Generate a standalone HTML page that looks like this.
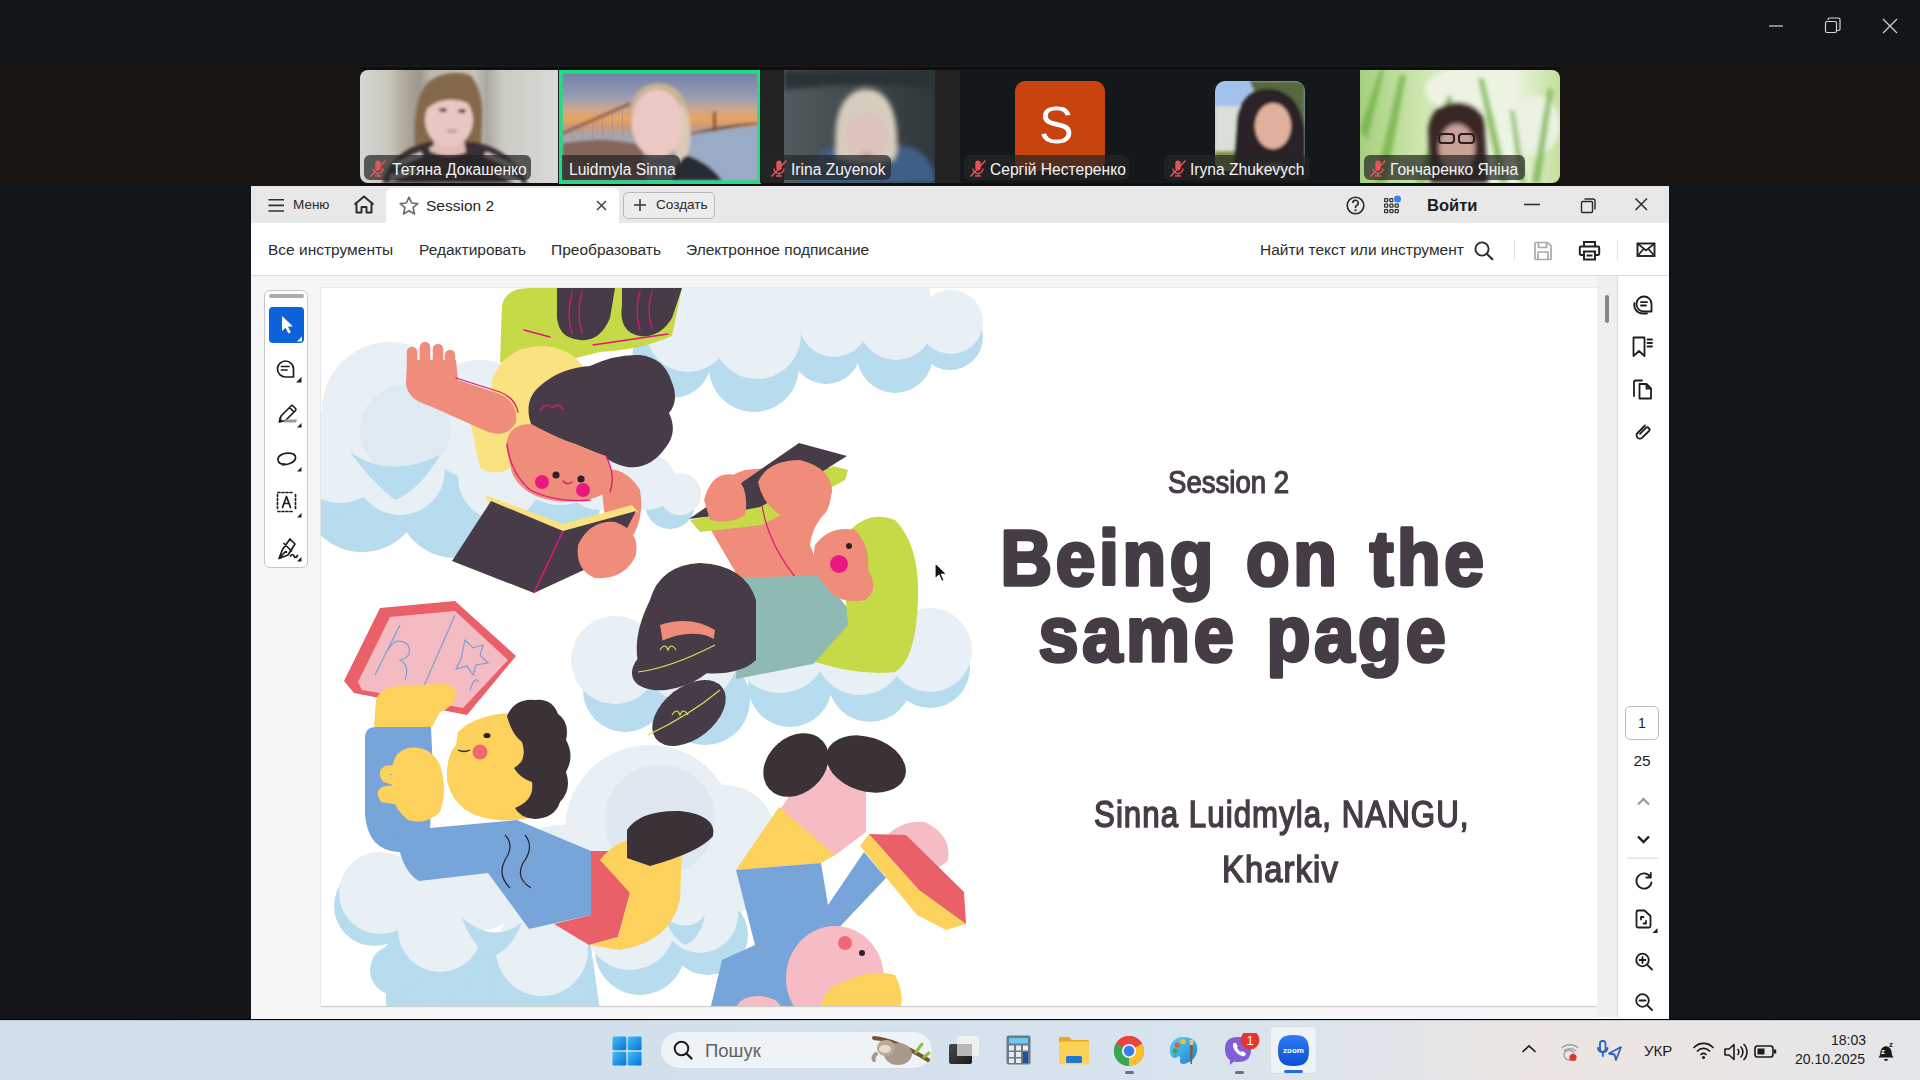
<!DOCTYPE html>
<html><head><meta charset="utf-8">
<style>
*{margin:0;padding:0;box-sizing:border-box}
html,body{width:1920px;height:1080px;overflow:hidden;background:#121619;font-family:"Liberation Sans",sans-serif;position:relative}
.a{position:absolute}
svg{display:block}
#strip{left:0;top:65px;width:1920px;height:121px;background:#1a1614}
.tile{position:absolute;top:70px;height:113px;overflow:hidden}
.nm{position:absolute;top:155px;height:25px;border-radius:6px;background:rgba(38,38,38,.72);color:#f4f4f4;font-size:15.6px;white-space:nowrap}
.nm svg{position:absolute;left:3px;top:4px}
.nm span{position:absolute;top:5.5px;left:28px;line-height:18px}
#win{left:251px;top:186px;width:1418px;height:833px;background:#fff;overflow:hidden}
#tabbar{left:0;top:0;width:1418px;height:37px;background:#e8e8e8}
#toolbar{left:0;top:37px;width:1418px;height:53px;background:#fff;border-bottom:1px solid #dadada}
.tx{position:absolute;white-space:nowrap;line-height:1}
#canvas{left:0;top:90px;width:1366px;height:743px;background:#f6f5f8}
#rpanel{left:1366px;top:90px;width:52px;height:743px;background:#fff;border-left:1px solid #dedede}
#taskbar{left:0;top:1020px;width:1920px;height:60px;background:linear-gradient(90deg,#cfdeea 0%,#d2e0ec 35%,#d7e3ee 60%,#e0e5ea 72%,#ece5e1 80%,#e9e5e4 90%,#e3e6ea 100%);border-top:1px solid #c4ccd4}
</style></head><body>
<!-- top window controls -->
<svg class="a" style="left:1760px;top:10px" width="150" height="35" viewBox="0 0 150 35">
 <line x1="9" y1="16" x2="23" y2="16" stroke="#d4d4d4" stroke-width="1.2"/>
 <rect x="65.5" y="11.5" width="11" height="11" rx="1.5" fill="none" stroke="#d4d4d4" stroke-width="1.2"/>
 <path d="M68 10 V9.5 a1.5 1.5 0 0 1 1.5 -1.5 H78.5 a1.5 1.5 0 0 1 1.5 1.5 V19 a1.5 1.5 0 0 1 -1.5 1.5 H77" fill="none" stroke="#d4d4d4" stroke-width="1.2"/>
 <path d="M123 9 L137 23 M137 9 L123 23" stroke="#d4d4d4" stroke-width="1.2"/>
</svg>

<div id="strip" class="a"></div>
<div class="a" style="left:360px;top:67px;width:1200px;height:3px;background:#0e0f10"></div>
<div class="a" style="left:360px;top:183px;width:1200px;height:3px;background:#0e0f10"></div>

<!-- tile 1 -->
<svg class="a" style="left:360px;top:70px" width="198" height="113" viewBox="0 0 198 113">
 <defs>
  <clipPath id="c1"><path d="M8 0 H198 V113 H8 A8 8 0 0 1 0 105 V8 A8 8 0 0 1 8 0Z"/></clipPath>
  <linearGradient id="g1" x1="0" x2="1" y1="0" y2="0">
   <stop offset="0" stop-color="#d5d7d3"/><stop offset=".14" stop-color="#c9c8be"/><stop offset=".22" stop-color="#b3ab9c"/><stop offset=".3" stop-color="#9a9890"/><stop offset=".36" stop-color="#bdb8aa"/><stop offset=".58" stop-color="#c4c2b8"/><stop offset=".64" stop-color="#aaa89f"/><stop offset=".72" stop-color="#cbcbc3"/><stop offset="1" stop-color="#d8dbd7"/>
  </linearGradient>
  <filter id="bl1"><feGaussianBlur stdDeviation="1.6"/></filter>
 </defs>
 <g clip-path="url(#c1)">
  <rect width="198" height="113" fill="url(#g1)"/>
  <g filter="url(#bl1)">
   <path d="M55 76 Q52 30 68 12 Q88 -2 110 5 Q124 20 122 52 L121 78 Q90 84 55 76Z" fill="#84694c"/>
   <path d="M22 113 Q32 80 68 72 L114 72 Q150 78 168 113Z" fill="#3a2f34"/>
   <path d="M36 95 L62 84 M125 84 L152 96 M30 108 L55 100 M138 102 L160 112 M70 80 L80 76" stroke="#cfccc8" stroke-width="5"/>
   <path d="M75 66 L103 66 L106 82 Q90 90 72 82Z" fill="#e2bcb5"/>
   <ellipse cx="89" cy="50" rx="24" ry="27" fill="#e9c7c1"/>
   <path d="M62 44 Q64 16 92 10 Q118 14 120 44 Q108 30 95 30 Q75 28 62 44Z" fill="#84694c"/>
   <ellipse cx="83" cy="40" rx="4" ry="2" fill="#4a3a36"/><ellipse cx="102" cy="41" rx="4" ry="2" fill="#4a3a36"/>
   <ellipse cx="92" cy="61" rx="6" ry="2" fill="#c89a98"/>
  </g>
 </g>
</svg>
<!-- tile 2 -->
<svg class="a" style="left:559px;top:70px" width="202" height="114" viewBox="0 0 202 114">
 <defs>
  <linearGradient id="g2" x1="0" x2="0" y1="0" y2="1">
   <stop offset="0" stop-color="#7382a6"/><stop offset=".22" stop-color="#9a9cb4"/><stop offset=".33" stop-color="#c8a890"/><stop offset=".42" stop-color="#e8a464"/><stop offset=".5" stop-color="#c89a7a"/><stop offset=".58" stop-color="#a8a4b0"/><stop offset="1" stop-color="#98a6bc"/>
  </linearGradient>
  <filter id="bl2"><feGaussianBlur stdDeviation="1.5"/></filter>
 </defs>
 <rect x="0" y="0" width="202" height="114" fill="#20dc84"/>
 <svg x="3.5" y="3.5" width="195" height="107" viewBox="0 0 195 107">
  <rect width="195" height="107" fill="url(#g2)"/>
  <g filter="url(#bl2)">
   <path d="M0 70 Q40 62 80 72 L85 107 H0Z" fill="#84665c"/>
   <path d="M122 62 L195 52 V107 H115Z" fill="#9aabc6"/>
   <path d="M0 60 L68 30" stroke="#8a5a48" stroke-width="2.5"/>
   <path d="M122 62 Q160 52 195 50" stroke="#8a5a48" stroke-width="2"/>
   <path d="M152 38 V58" stroke="#7a4a3a" stroke-width="2.5"/>
   <ellipse cx="96" cy="34" rx="27" ry="24" fill="#c9b594"/>
   <ellipse cx="119" cy="60" rx="9" ry="28" fill="#d8cab4"/>
   <ellipse cx="95" cy="50" rx="26" ry="34" fill="#ebc8c2"/>
   <path d="M110 107 Q115 85 125 82 Q145 88 160 107Z" fill="#262a36"/>
  </g>
  <g stroke="#a08880" stroke-width=".8" opacity=".6"><path d="M10 55 V68 M20 51 V68 M30 47 V68 M40 42 V68 M50 38 V68 M60 34 V68"/></g>
 </svg>
</svg>
<!-- tile 3 -->
<div class="a" style="left:760px;top:70px;width:200px;height:113px;background:#232323"></div>
<svg class="a" style="left:784px;top:70px" width="151" height="113" viewBox="0 0 151 113">
 <defs>
  <linearGradient id="g3" x1="0" x2="1" y1="0" y2="0">
   <stop offset="0" stop-color="#535c60"/><stop offset=".5" stop-color="#40484a"/><stop offset="1" stop-color="#30363a"/>
  </linearGradient>
  <filter id="bl3"><feGaussianBlur stdDeviation="2.5"/></filter>
 </defs>
 <rect width="151" height="113" fill="url(#g3)"/>
 <g filter="url(#bl3)">
  <path d="M0 0 H151 V18 Q80 10 0 20Z" fill="#2c3236"/>
  <path d="M15 113 Q25 80 60 74 Q95 70 130 78 Q151 90 151 113Z" fill="#3f5e88"/>
  <path d="M52 82 Q48 35 70 22 Q82 16 95 22 Q115 35 113 80 L110 90 Q80 96 52 88Z" fill="#d6cdbd"/>
  <ellipse cx="83" cy="66" rx="22" ry="24" fill="#dcc4bc"/>
  <ellipse cx="83" cy="85" rx="7" ry="2" fill="#b88a86"/>
 </g>
</svg>
<!-- tile 4 -->
<div class="a" style="left:960px;top:70px;width:400px;height:113px;background:#14181b"></div>
<div class="a" style="left:1015px;top:81px;width:90px;height:90px;border-radius:10px;background:#c9430e"></div>
<div class="tx a" style="left:1039px;top:99px;font-size:52px;color:#fff">S</div>
<!-- tile 5 -->
<svg class="a" style="left:1215px;top:81px" width="90" height="90" viewBox="0 0 90 90">
 <defs>
  <clipPath id="c5"><rect width="90" height="90" rx="10"/></clipPath>
  <filter id="bl5"><feGaussianBlur stdDeviation="1.4"/></filter>
 </defs>
 <g clip-path="url(#c5)">
  <rect width="90" height="90" fill="#a0c2ec"/>
  <g filter="url(#bl5)">
   <path d="M35 0 H90 V50 L80 40 Q60 15 40 12Z" fill="#59683e"/>
   <rect x="0" y="25" width="36" height="55" fill="#dcded8"/>
   <rect x="0" y="70" width="60" height="20" fill="#7f9a42"/>
   <path d="M18 90 L22 35 Q30 5 58 8 Q85 12 90 50 L90 90Z" fill="#2a2325"/>
   <ellipse cx="58" cy="45" rx="18" ry="23" fill="#e0b09c"/>
   <path d="M38 90 Q58 75 78 90Z" fill="#7b6b5e"/>
  </g>
 </g>
</svg>
<!-- tile 6 -->
<svg class="a" style="left:1360px;top:70px" width="200" height="113" viewBox="0 0 200 113">
 <defs>
  <clipPath id="c6"><path d="M0 0 H192 A8 8 0 0 1 200 8 V105 A8 8 0 0 1 192 113 H0Z"/></clipPath>
  <linearGradient id="g6" x1="0" x2="1" y1="0" y2="0">
   <stop offset="0" stop-color="#a6cf7e"/><stop offset=".3" stop-color="#cde6ae"/><stop offset=".55" stop-color="#e6f1da"/><stop offset=".75" stop-color="#eef5e6"/><stop offset="1" stop-color="#c4e09c"/>
  </linearGradient>
  <filter id="bl6"><feGaussianBlur stdDeviation="2.2"/></filter>
 </defs>
 <g clip-path="url(#c6)">
  <rect width="200" height="113" fill="url(#g6)"/>
  <g filter="url(#bl6)">
   <ellipse cx="110" cy="20" rx="45" ry="22" fill="#eef4e4"/>
   <ellipse cx="175" cy="55" rx="25" ry="30" fill="#eaf2e2"/>
   <path d="M15 113 L40 5 L46 5 L26 113Z M140 113 L118 8 L124 8 L148 113Z M172 113 L188 18 L193 20 L180 113Z M55 113 L88 25 L93 27 L66 113Z M0 60 L20 0 L24 0 L7 70Z M160 113 L150 40 L154 40 L166 113Z" fill="#6aac3a" opacity=".7"/>
   <path d="M70 113 L68 60 Q70 33 98 32 Q126 34 125 62 L128 113Z" fill="#3a2526"/>
   <ellipse cx="97" cy="78" rx="18" ry="24" fill="#caa196"/>
  </g>
  <g fill="none" stroke="#2a1e1e" stroke-width="2"><rect x="79" y="64" width="15" height="9" rx="3"/><rect x="99" y="64" width="15" height="9" rx="3"/></g>
 </g>
</svg>
<!-- name labels -->
<div class="nm" style="left:364px;width:167px"><svg width="22" height="19" viewBox="0 0 22 19"><rect x="8.3" y="1.5" width="5.4" height="10" rx="2.7" fill="#e8525a"/><path d="M6 9.5 a5 5 0 0 0 10 0 M11 14.5 v2.2 M8 17 h6" fill="none" stroke="#e8525a" stroke-width="1.4"/><path d="M3.5 17.5 L18.5 1.5" stroke="#e8525a" stroke-width="1.5"/></svg><span>Тетяна Докашенко</span></div>
<div class="nm" style="left:562px;width:118px;border-radius:0 6px 6px 0"><span style="left:7px">Luidmyla Sinna</span></div>
<div class="nm" style="left:765px;width:126px"><svg width="22" height="19" viewBox="0 0 22 19"><rect x="8.3" y="1.5" width="5.4" height="10" rx="2.7" fill="#e8525a"/><path d="M6 9.5 a5 5 0 0 0 10 0 M11 14.5 v2.2 M8 17 h6" fill="none" stroke="#e8525a" stroke-width="1.4"/><path d="M3.5 17.5 L18.5 1.5" stroke="#e8525a" stroke-width="1.5"/></svg><span style="left:26px">Irina Zuyenok</span></div>
<div class="nm" style="left:964px;width:165px"><svg width="22" height="19" viewBox="0 0 22 19"><rect x="8.3" y="1.5" width="5.4" height="10" rx="2.7" fill="#e8525a"/><path d="M6 9.5 a5 5 0 0 0 10 0 M11 14.5 v2.2 M8 17 h6" fill="none" stroke="#e8525a" stroke-width="1.4"/><path d="M3.5 17.5 L18.5 1.5" stroke="#e8525a" stroke-width="1.5"/></svg><span style="left:26px">Сергій Нестеренко</span></div>
<div class="nm" style="left:1164px;width:146px"><svg width="22" height="19" viewBox="0 0 22 19"><rect x="8.3" y="1.5" width="5.4" height="10" rx="2.7" fill="#e8525a"/><path d="M6 9.5 a5 5 0 0 0 10 0 M11 14.5 v2.2 M8 17 h6" fill="none" stroke="#e8525a" stroke-width="1.4"/><path d="M3.5 17.5 L18.5 1.5" stroke="#e8525a" stroke-width="1.5"/></svg><span style="left:26px">Iryna Zhukevych</span></div>
<div class="nm" style="left:1364px;width:161px"><svg width="22" height="19" viewBox="0 0 22 19"><rect x="8.3" y="1.5" width="5.4" height="10" rx="2.7" fill="#e8525a"/><path d="M6 9.5 a5 5 0 0 0 10 0 M11 14.5 v2.2 M8 17 h6" fill="none" stroke="#e8525a" stroke-width="1.4"/><path d="M3.5 17.5 L18.5 1.5" stroke="#e8525a" stroke-width="1.5"/></svg><span style="left:26px">Гончаренко Яніна</span></div>
<div id="win" class="a">
 <div id="tabbar" class="a"></div>
 <!-- hamburger + Меню -->
 <svg class="a" style="left:16px;top:11px" width="20" height="18" viewBox="0 0 20 18"><path d="M1.5 2.7 H17 M1.5 8.4 H17 M1.5 14 H17" stroke="#2f2f2f" stroke-width="1.6"/></svg>
 <div class="tx" style="left:42px;top:12px;font-size:13.5px;color:#2b2b2b">Меню</div>
 <svg class="a" style="left:101px;top:9px" width="24" height="20" viewBox="0 0 24 20"><path d="M2.5 9.5 L12 1.5 L21.5 9.5 M4.5 8 V17.5 H9.5 V12 H14.5 V17.5 H19.5 V8" fill="none" stroke="#2b2b2b" stroke-width="1.9" stroke-linejoin="round"/></svg>
 <!-- tab -->
 <div class="a" style="left:135px;top:2px;width:233px;height:35px;background:#fff;border-radius:6px 6px 0 0"></div>
 <svg class="a" style="left:147px;top:9px" width="22" height="22" viewBox="0 0 22 22"><path d="M11 2.2 L13.6 8 L19.8 8.6 L15.1 12.7 L16.5 18.9 L11 15.7 L5.5 18.9 L6.9 12.7 L2.2 8.6 L8.4 8 Z" fill="none" stroke="#6f6f6f" stroke-width="1.7" stroke-linejoin="round"/></svg>
 <div class="tx" style="left:175px;top:12px;font-size:15.5px;color:#1f1f1f">Session 2</div>
 <svg class="a" style="left:344px;top:13px" width="13" height="13" viewBox="0 0 13 13"><path d="M2 2 L11 11 M11 2 L2 11" stroke="#444" stroke-width="1.5"/></svg>
 <!-- create button -->
 <div class="a" style="left:372px;top:6px;width:92px;height:27px;border:1px solid #b9b9b9;border-radius:5px;background:#ececec"></div>
 <svg class="a" style="left:382px;top:12px" width="14" height="14" viewBox="0 0 14 14"><path d="M7 1 V13 M1 7 H13" stroke="#333" stroke-width="1.5"/></svg>
 <div class="tx" style="left:405px;top:12px;font-size:13.6px;color:#2b2b2b">Создать</div>
 <!-- right of tabbar -->
 <svg class="a" style="left:1094px;top:9px" width="21" height="21" viewBox="0 0 21 21"><circle cx="10.5" cy="10.5" r="8.3" fill="none" stroke="#2b2b2b" stroke-width="1.6"/><path d="M7.8 8 a2.7 2.7 0 1 1 3.8 2.5 q-1.1 .6 -1.1 1.8 v.6" fill="none" stroke="#2b2b2b" stroke-width="1.6"/><circle cx="10.5" cy="15.3" r="1.1" fill="#2b2b2b"/></svg>
 <svg class="a" style="left:1132px;top:8px" width="22" height="22" viewBox="0 0 22 22"><g fill="#2b2b2b"><rect x="1" y="4" width="4.3" height="4.3" rx="1.2"/><rect x="6.3" y="4" width="4.3" height="4.3" rx="1.2"/><rect x="1" y="9.5" width="4.3" height="4.3" rx="1.2"/><rect x="6.3" y="9.5" width="4.3" height="4.3" rx="1.2"/><rect x="11.6" y="9.5" width="4.3" height="4.3" rx="1.2"/><rect x="1" y="15" width="4.3" height="4.3" rx="1.2"/><rect x="6.3" y="15" width="4.3" height="4.3" rx="1.2"/><rect x="11.6" y="15" width="4.3" height="4.3" rx="1.2"/></g><g fill="#e8e8e8"><rect x="2.2" y="5.2" width="1.9" height="1.9"/><rect x="7.5" y="5.2" width="1.9" height="1.9"/><rect x="2.2" y="10.7" width="1.9" height="1.9"/><rect x="7.5" y="10.7" width="1.9" height="1.9"/><rect x="12.8" y="10.7" width="1.9" height="1.9"/><rect x="2.2" y="16.2" width="1.9" height="1.9"/><rect x="7.5" y="16.2" width="1.9" height="1.9"/><rect x="12.8" y="16.2" width="1.9" height="1.9"/></g><circle cx="14.5" cy="5" r="4.2" fill="#e8e8e8"/><circle cx="14.5" cy="5" r="3.5" fill="#3b82f0"/></svg>
 <div class="tx" style="left:1176px;top:11px;font-size:16.5px;font-weight:bold;color:#1b1b1b">Войти</div>
 <svg class="a" style="left:1270px;top:8px" width="130" height="22" viewBox="0 0 130 22"><path d="M3 10.5 H19" stroke="#2b2b2b" stroke-width="1.5"/><path d="M61.5 7.5 h9 a1 1 0 0 1 1 1 v9 a1 1 0 0 1 -1 1 h-9 a1 1 0 0 1 -1 -1 v-9 a1 1 0 0 1 1 -1z M63.5 5 h8.5 a2 2 0 0 1 2 2 v8.5" fill="none" stroke="#2b2b2b" stroke-width="1.4"/><path d="M114.5 4.5 L126 16 M126 4.5 L114.5 16" stroke="#2b2b2b" stroke-width="1.5"/></svg>

 <div id="toolbar" class="a"></div>
 <div class="tx" style="left:17px;top:55.5px;font-size:15.5px;color:#2c2c2c">Все инструменты</div>
 <div class="tx" style="left:168px;top:55.5px;font-size:15.5px;color:#2c2c2c">Редактировать</div>
 <div class="tx" style="left:300px;top:55.5px;font-size:15.5px;color:#2c2c2c">Преобразовать</div>
 <div class="tx" style="left:435px;top:55.5px;font-size:15.5px;color:#2c2c2c">Электронное подписание</div>
 <div class="tx" style="left:1009px;top:55.5px;font-size:15.5px;color:#2c2c2c">Найти текст или инструмент</div>
 <svg class="a" style="left:1222px;top:54px" width="22" height="22" viewBox="0 0 22 22"><circle cx="9" cy="9" r="6.6" fill="none" stroke="#2b2b2b" stroke-width="1.9"/><path d="M13.8 13.8 L19.3 19.3" stroke="#2b2b2b" stroke-width="2.1" stroke-linecap="round"/></svg>
 <div class="a" style="left:1263px;top:54px;width:1px;height:20px;background:#e2e2e2"></div>
 <svg class="a" style="left:1281px;top:54px" width="22" height="22" viewBox="0 0 22 22"><path d="M3 3.5 a1 1 0 0 1 1 -1 H15.5 L19 6 V18.5 a1 1 0 0 1 -1 1 H4 a1 1 0 0 1 -1 -1Z M6.5 2.5 V7.5 H14.5 V2.5 M6 19.5 V12 H16 V19.5" fill="none" stroke="#a9a9a9" stroke-width="1.7" stroke-linejoin="round"/></svg>
 <svg class="a" style="left:1327px;top:54px" width="23" height="22" viewBox="0 0 23 22"><path d="M6 6.5 V2 H17 V6.5 M5.5 15 H3 a1.2 1.2 0 0 1 -1.2 -1.2 V7.7 a1.2 1.2 0 0 1 1.2 -1.2 H20 a1.2 1.2 0 0 1 1.2 1.2 V13.8 a1.2 1.2 0 0 1 -1.2 1.2 H17.5" fill="none" stroke="#222" stroke-width="2"/><path d="M6 11.5 H17 V19.5 H6Z M8.5 15.5 H14.5" fill="none" stroke="#222" stroke-width="2"/></svg>
 <div class="a" style="left:1366px;top:54px;width:1px;height:20px;background:#e2e2e2"></div>
 <svg class="a" style="left:1384px;top:54px" width="22" height="20" viewBox="0 0 22 20"><rect x="2.5" y="3.5" width="17" height="12.5" fill="none" stroke="#222" stroke-width="1.9"/><path d="M2.5 3.5 L11 10.5 L19.5 3.5 M2.5 16 L8.5 9 M19.5 16 L13.5 9" fill="none" stroke="#222" stroke-width="1.7"/></svg>

 <div id="canvas" class="a"></div>
 <!-- tool palette -->
 <div class="a" style="left:13px;top:104px;width:44px;height:278px;background:#fff;border:1px solid #c6c6c6;border-radius:6px"></div>
 <div class="a" style="left:18px;top:108px;width:35px;height:4px;background:#ababab;border-radius:2px"></div>
 <div class="a" style="left:18px;top:121px;width:35px;height:36px;background:#0d63d9;border-radius:4px"></div>
 <svg class="a" style="left:18px;top:121px" width="36" height="36" viewBox="0 0 36 36"><path d="M13 9 L13 24 L16.6 20.8 L19.4 26.5 L21.8 25.3 L19 19.7 L23.8 19.3 Z" fill="#fff"/><path d="M28 34.5 L33 34.5 L33 29.5Z" fill="#fff"/></svg>
 <svg class="a" style="left:18px;top:162px" width="36" height="220" viewBox="0 0 36 220">
  <g fill="none" stroke="#1e1e1e" stroke-width="1.7" stroke-linejoin="round" stroke-linecap="round">
   <path d="M24.5 21 a8 8 0 1 0 -8 8 H24.5 Z"/>
   <path d="M12.5 18.5 H20 M12.5 22 H18"/>
   <path d="M23.5 57.5 L26.5 60.5 Q27.5 61.5 26.5 62.5 L16.5 72.5 L10.5 74 L12 68 L22 58 Q22.7 57 23.5 57.5Z M20.5 59.5 L24.5 63.5"/>
   <path d="M16 116 C9 117 7 111 11 107.5 C15 104 26 104 26.5 109 C27 114 20 116.5 13.5 117"/>
   <path d="M9 144.5 h2 M13 144.5 h2 M17 144.5 h2 M21 144.5 h2 M9 163.5 h2 M13 163.5 h2 M17 163.5 h2 M21 163.5 h2 M8.5 146.5 v2 M8.5 150.5 v2 M8.5 154.5 v2 M8.5 158.5 v2 M26.5 146.5 v2 M26.5 150.5 v2 M26.5 154.5 v2 M26.5 158.5 v2"/>
   <path d="M13.5 159.5 L17.5 148.5 L21.5 159.5 M14.8 155.5 H20.2"/>
   <path d="M21 191 L26 196 L19 207 L10 210.5 L13.5 201.5Z M10 210.5 L16 204 M15 195.5 L22.5 203 M21.5 208 q2 -3 3.5 0 q1.5 3 3.5 -.5"/>
  </g>
  <path d="M10.5 69 L13.5 73 L9.5 74.5Z" fill="#1e1e1e"/>
  <path d="M16 71.5 L28 71.5 L27 74.5 L15 74.5Z" fill="#9a9a9a"/>
  <circle cx="17" cy="204" r="1.3" fill="#1e1e1e"/>
  <g fill="#1e1e1e"><path d="M27 34.5 L32.5 34.5 L32.5 29Z"/><path d="M28 79.5 L32.5 79.5 L32.5 75Z"/><path d="M28 123.5 L32.5 123.5 L32.5 119Z"/><path d="M28 169.5 L32.5 169.5 L32.5 165Z"/><path d="M28 213.5 L32.5 213.5 L32.5 209Z"/></g>
 </svg>
 <!-- page -->
 <div class="a" style="left:70px;top:102px;width:1276px;height:718px;background:#fff;box-shadow:0 0 1px #bcbcbc,0 1px 1px #d0d0d0"></div>
 <div class="a" style="left:1346px;top:90px;width:20px;height:743px;background:#efeef1"></div>
 <div class="a" style="left:1354px;top:109px;width:3.5px;height:28px;background:#858585;border-radius:2px"></div>
 <div id="rpanel" class="a"></div>
 <svg class="a" style="left:1376px;top:104px" width="32" height="170" viewBox="0 0 32 170">
  <g fill="none" stroke="#1e1e1e" stroke-width="1.8" stroke-linejoin="round" stroke-linecap="round">
   <path d="M24.5 14 a7.5 7.5 0 1 0 -7.5 7.5 H24.5Z M14 12.2 H20 M14 15.5 H19"/>
   <path d="M7.5 13 a8.5 8.5 0 0 0 8.5 10.5 H20"/>
   <path d="M6.5 47.5 H17.5 V66 L12 61 L6.5 66Z M20.5 49.5 H25 M20.5 53 H25 M20.5 56.5 H25"/>
   <path d="M12.5 94 H19.5 L24 98.5 V108.5 H12.5Z M19.5 94 V98.5 H24"/>
   <path d="M7 106 V92 a1.5 1.5 0 0 1 1.5 -1.5 H15"/>
   <path d="M18 135.5 L10.5 143 a3.3 3.3 0 0 0 4.7 4.7 L22 141 a2.2 2.2 0 0 0 -3.1 -3.1 L13 143.8"/>
  </g>
 </svg>
 <div class="a" style="left:1374px;top:520px;width:34px;height:34px;border:1px solid #bdbdbd;border-radius:5px;background:#fff"></div>
 <div class="tx" style="left:1374px;top:530px;width:34px;text-align:center;font-size:14px;color:#1e1e1e">1</div>
 <div class="tx" style="left:1370px;top:567px;width:42px;text-align:center;font-size:15.5px;color:#1e1e1e">25</div>
 <svg class="a" style="left:1376px;top:600px" width="32" height="233" viewBox="0 0 32 233">
  <path d="M11 18.5 L16.5 13 L22 18.5" fill="none" stroke="#9a9a9a" stroke-width="2.2"/>
  <path d="M11 50.5 L16.5 56 L22 50.5" fill="none" stroke="#1e1e1e" stroke-width="2.4"/>
  <path d="M-2 72.3 H34" stroke="#e4e4e4" stroke-width="1.5"/>
  <g fill="none" stroke="#1e1e1e" stroke-width="1.8" stroke-linecap="round" stroke-linejoin="round">
   <path d="M23.5 91 a7.6 7.6 0 1 0 1 5.5 M23.8 87 V91.5 H19.3"/>
   <path d="M9.5 140 V126 a1.5 1.5 0 0 1 1.5 -1.5 H17.5 L23.5 130 V140 a1.5 1.5 0 0 1 -1.5 1.5 H11 a1.5 1.5 0 0 1 -1.5 -1.5Z M14 133.5 v-2.5 h2.5 M19 135 v2.5 h-2.5"/>
   <circle cx="15.5" cy="174" r="6.3"/><path d="M20 178.5 L25 183.5 M12.5 174 H18.5 M15.5 171 V177"/>
   <circle cx="15.5" cy="214.5" r="6.3"/><path d="M20 219 L25 224 M12.5 214.5 H18.5"/>
  </g>
  <path d="M25.5 147 L30.5 147 L30.5 142Z" fill="#1e1e1e"/>
 </svg>
 <div class="a" style="left:0;top:831px;width:1418px;height:2px;background:#f8f8f8"></div>
</div>
<div class="a" style="left:0;top:1019px;width:1920px;height:1px;background:#000"></div>
<svg class="a" style="left:321px;top:288px" width="680" height="718" viewBox="321 288 680 718">
 <defs><clipPath id="pg"><rect x="321" y="288" width="680" height="718"/></clipPath></defs>
 <g clip-path="url(#pg)">
 <!-- ===== clouds ===== -->
 <!-- top-left cloud -->
 <g fill="#b6dcee">
  <circle cx="362" cy="492" r="60"/><circle cx="455" cy="500" r="58"/><circle cx="545" cy="505" r="55"/><circle cx="330" cy="470" r="45"/>
 </g>
 <g fill="#e8eff5">
  <circle cx="390" cy="410" r="68"/><circle cx="480" cy="420" r="60"/><circle cx="560" cy="450" r="55"/><circle cx="340" cy="455" r="48"/><circle cx="400" cy="470" r="45"/><circle cx="500" cy="478" r="42"/><circle cx="600" cy="470" r="40"/>
 </g>
 <g fill="#dfe9f1"><circle cx="405" cy="430" r="45"/></g>
 <path d="M350 452 Q390 480 440 455 Q420 490 395 500 Q370 480 350 452Z" fill="#b6dcee"/>
 <!-- top-right cloud -->
 <g fill="#b6dcee">
  <rect x="640" y="288" width="290" height="62"/>
  <circle cx="672" cy="358" r="40"/><circle cx="754" cy="367" r="45"/><circle cx="826" cy="349" r="35"/><circle cx="895" cy="355" r="38"/><circle cx="950" cy="337" r="33"/>
 </g>
 <g fill="#e8eff5">
  <rect x="640" y="288" width="290" height="36"/>
  <circle cx="688" cy="330" r="42"/><circle cx="757" cy="335" r="44"/><circle cx="834" cy="322" r="35"/><circle cx="896" cy="322" r="38"/><circle cx="951" cy="322" r="32"/>
 </g>
 <!-- small cloud near book -->
 <circle cx="670" cy="504" r="25" fill="#b6dcee"/>
 <circle cx="648" cy="482" r="28" fill="#e8eff5"/><circle cx="680" cy="494" r="21" fill="#e8eff5"/>
 <!-- middle cloud -->
 <g fill="#b6dcee">
  <circle cx="625" cy="690" r="42"/><circle cx="705" cy="700" r="45"/><circle cx="790" cy="685" r="42"/><circle cx="870" cy="680" r="42"/><circle cx="930" cy="668" r="40"/>
 </g>
 <g fill="#e8eff5">
  <circle cx="615" cy="660" r="44"/><circle cx="690" cy="655" r="48"/><circle cx="780" cy="645" r="48"/><circle cx="860" cy="650" r="45"/><circle cx="930" cy="650" r="42"/>
 </g>
 <!-- bottom-left cloud -->
 <g fill="#b6dcee">
  <circle cx="374" cy="906" r="40"/>
  <path d="M386 945 L590 940 L600 1010 L386 1010Z"/>
  <circle cx="430" cy="960" r="45"/><circle cx="540" cy="978" r="50"/><circle cx="640" cy="950" r="45"/><circle cx="708" cy="935" r="40"/><circle cx="395" cy="970" r="25"/>
 </g>
 <g fill="#e8eff5">
  <circle cx="380" cy="893" r="41"/><circle cx="425" cy="880" r="30"/><circle cx="735" cy="882" r="30"/>
  <circle cx="650" cy="830" r="85"/><circle cx="725" cy="835" r="50"/>
  <circle cx="480" cy="880" r="50"/><circle cx="560" cy="880" r="55"/>
  <circle cx="440" cy="930" r="42"/><circle cx="542" cy="950" r="46"/><circle cx="630" cy="925" r="45"/><circle cx="700" cy="915" r="38"/>
 </g>
 <g fill="#dfe8f0"><circle cx="660" cy="820" r="55"/></g>
 <path d="M462 918 Q495 945 522 922 Q512 950 490 958 Q472 945 462 918Z" fill="#b6dcee"/>
 <path d="M665 918 Q690 935 705 915 Q700 940 685 945 Q672 938 665 918Z" fill="#b6dcee"/>

 <!-- ===== girl 1 ===== -->
 <path d="M500 362 L502 305 Q506 288 530 288 H682 L672 336 Q640 350 600 352 L560 362 Q525 372 500 362Z" fill="#c6d947"/>
 <path d="M557 288 H615 L610 318 Q600 342 580 340 Q555 338 557 310Z" fill="#463b46"/>
 <path d="M622 288 H682 L672 318 Q660 338 640 336 Q618 332 622 305Z" fill="#463b46"/>
 <path d="M492 380 Q505 345 545 346 Q585 350 592 390 L590 460 Q570 480 530 470 Q495 455 488 420Z" fill="#f9e27f"/>
 <path d="M470 420 Q490 405 515 412 L520 460 Q500 480 480 468Z" fill="#f9e27f"/>
 <path d="M406 384 L407 360 L456 360 L458 380 L500 394 Q518 402 516 422 Q508 438 488 432 L430 406 Q408 400 406 384Z" fill="#ef8c7a"/>
 <g stroke="#ef8c7a" stroke-width="10.5" stroke-linecap="round"><path d="M412 364 V352 M425 362 V347 M438 362 V349 M450 366 V355"/></g>
 <path d="M531 424 Q523 400 540 386 Q560 368 590 366 Q615 354 640 355 Q664 358 671 380 Q680 400 669 413 Q678 432 666 447 Q650 470 627 467 Q610 463 604 456 Q585 448 575 444 Q555 438 531 424Z" fill="#463b46"/>
 <path d="M506 446 Q508 424 531 424 Q560 440 606 456 Q616 476 608 491 Q590 504 555 501 Q522 496 512 473Z" fill="#ef8c7a"/>
 <path d="M600 470 Q625 465 640 490 Q645 520 630 540 L605 520Z" fill="#ef8c7a"/>
 <circle cx="556" cy="475" r="3.6" fill="#2a2228"/><circle cx="581" cy="479" r="3.6" fill="#2a2228"/>
 <circle cx="542" cy="482" r="7" fill="#e8197e"/><circle cx="583" cy="490" r="7" fill="#e8197e"/>
 <path d="M485 495 L563 524 L632 505 L638 512 L563 534 L489 504Z" fill="#f9e27f"/>
 <path d="M491 501 L563 531 L534 593 L452 561Z" fill="#463b46"/>
 <path d="M563 531 L636 511 L612 557 L534 593Z" fill="#463b46"/>
 <path d="M563 531 L534 593" stroke="#e0177a" stroke-width="1.5"/>
 <path d="M578 545 Q590 520 615 522 Q640 530 636 555 Q625 580 595 578 Q575 570 578 545Z" fill="#ef8c7a"/>

 <g fill="none" stroke="#e0177a" stroke-width="1.3" stroke-linecap="round">
  <path d="M572 292 Q566 315 572 334 M582 292 Q576 312 582 333 M640 292 Q634 310 640 330 M652 292 Q646 310 652 328"/>
  <path d="M524 330 L550 337 M593 345 L668 334"/>
  <path d="M456 378 L500 392 Q515 398 518 412"/>
  <path d="M507 444 Q510 472 530 490 Q555 503 590 500 M606 456 Q616 475 610 492"/>
  <path d="M540 410 q6 -8 12 -2 q6 -6 11 1"/>
  <path d="M563 481 q4 5 9 1"/>
 </g>
 <!-- ===== girl 2 ===== -->
 <path d="M705 520 Q712 480 745 470 L828 462 Q836 495 826 512 Q812 526 810 545 L822 576 L740 580Z" fill="#ef8c7a"/>
 <path d="M689 519 L799 443 L847 456 L831 466 L760 510Z" fill="#463b46"/>
 <path d="M690 520 L760 507 L833 466 L848 470 L845 480 L762 525 L700 532Z" fill="#c6d947"/>
 <path d="M758 482 Q768 460 800 460 Q832 468 832 492 Q826 515 800 522 Q765 515 758 482Z" fill="#ef8c7a"/>
 <path d="M762 505 Q768 545 800 583" stroke="#e0177a" stroke-width="1.2" fill="none"/>
 <path d="M704 500 Q712 470 735 475 Q750 490 745 515 Q730 525 710 520Z" fill="#ef8c7a"/>
 <path d="M740 578 L820 575 L852 613 L849 635 L813 664 L736 679Z" fill="#8fbab4"/>
 <path d="M850 530 Q870 510 895 520 Q920 545 918 600 Q916 660 895 672 Q860 676 815 662 L848 625 Q842 570 850 530Z" fill="#c6d947"/>
 <path d="M815 545 Q830 525 855 530 Q870 545 868 570 Q880 590 865 600 Q835 605 825 585 Q810 570 815 545Z" fill="#ef8c7a"/>
 <circle cx="849" cy="546" r="3" fill="#2a2228"/><circle cx="839" cy="564" r="9" fill="#e8197e"/>
 <path d="M650 600 Q660 565 700 563 Q745 565 756 600 L756 660 Q740 676 700 673 L640 670 Q630 640 650 600Z" fill="#463b46"/>
 <path d="M660 625 Q690 615 715 630 L712 650 L665 655Z" fill="#ef8c7a"/>
 <ellipse cx="676" cy="662" rx="46" ry="25" transform="rotate(-20 676 662)" fill="#463b46"/>
 <path d="M672 692 Q700 680 718 690 L700 705Z" fill="#ef8c7a"/>
 <ellipse cx="689" cy="713" rx="42" ry="26" transform="rotate(-38 689 713)" fill="#463b46"/>
 <g fill="none" stroke="#d6de5a" stroke-width="1.2"><path d="M638 672 Q670 668 715 645 M648 735 Q690 715 720 690 M660 650 q5 -8 8 0 q3 -8 8 0 M672 715 q5 -8 8 0 q3 -8 8 0"/></g>

 <!-- ===== boy ===== -->
 <path d="M344 681 L380 608 L455 601 L516 656 L467 715 L354 693Z" fill="#ea6068"/>
 <path d="M358 682 L390 617 L455 611 L508 660 L463 708 L362 690Z" fill="#f5bbc2"/>
 <g fill="none" stroke="#6e9fd6" stroke-width="1.1"><path d="M375 675 L400 625 M420 695 L455 615 M388 650 q8 -15 20 -5 q5 12 -8 15 q10 5 5 20 M465 640 l8 8 l10 -3 l-3 10 l8 8 l-12 2 l-3 10 l-6 -9 l-11 3 l5 -10Z M470 690 q5 -15 8 -8"/></g>
 <path d="M374 727 L376 700 Q380 688 398 686 L440 684 Q458 684 456 696 Q452 708 440 712 L432 727Z" fill="#fdd25c"/>
 <path d="M365 738 Q365 727 376 727 L431 727 L433 770 L430 830 Q410 852 398 852 Q368 850 365 815Z" fill="#78a5d9"/>
 <path d="M396 831 L517 820 L591 851 L591 915 L529 929 L488 873 L419 881 Q400 870 396 831Z" fill="#78a5d9"/>
 <path d="M591 851 L622 851 L630 893 L618 937 L589 945 L554 924 L591 915Z" fill="#ea6068"/>
 <path d="M600 860 Q615 840 640 838 L682 845 L680 900 Q670 942 620 950 L589 945 L618 937 L630 893Z" fill="#fdd25c"/>
 <path d="M627 830 Q640 810 680 811 Q717 815 713 836 Q700 852 650 866 L627 858Z" fill="#3a3236"/>
 <path d="M482 718 Q505 710 520 716 L545 760 Q548 800 530 818 Q500 824 475 815 Q452 805 447 780 Q446 755 456 745 L458 732 Q468 722 482 718Z" fill="#fdd25c"/>
 <path d="M507 716 Q515 698 535 700 Q552 698 558 714 Q570 722 566 740 Q575 756 566 772 Q572 790 560 802 Q555 818 535 819 Q520 818 515 808 Q535 800 532 782 Q520 778 514 768 Q528 760 522 742 Q512 735 507 716Z" fill="#3a3236"/>
 <path d="M392 772 Q392 752 408 748 Q430 745 440 765 Q448 790 440 812 Q425 826 408 820 Q395 810 392 795Z" fill="#fdd25c"/>
 <path d="M395 770 Q380 768 386 778 L398 782 M392 790 Q378 790 384 798 L398 800" stroke="#fdd25c" stroke-width="9" stroke-linecap="round" fill="none"/>
 <circle cx="480" cy="752" r="7.5" fill="#ee6a70"/><ellipse cx="487" cy="735.5" rx="3.5" ry="2.6" fill="#2a2228"/>
 <path d="M458 750 q6 3 12 0" stroke="#2a2228" stroke-width="1.3" fill="none"/>
 <g fill="none" stroke="#2a2228" stroke-width="1.2"><path d="M505 835 q10 10 0 25 q-8 15 5 28 M525 835 q10 12 -2 28 q-8 15 8 25"/></g>

 <!-- ===== kid 4 ===== -->
 <path d="M779 812 L808 765 L866 776 L866 832 L834 856 L790 846Z" fill="#f6bcc3"/>
 <ellipse cx="796" cy="765" rx="36" ry="28" transform="rotate(-42 796 765)" fill="#3a3236"/>
 <ellipse cx="866" cy="764" rx="41" ry="27" transform="rotate(18 866 764)" fill="#3a3236"/>
 <path d="M736 870 L779 807 L816 839 L835 855 L821 863Z" fill="#fdd25c"/>
 <path d="M736 870 L821 863 L828 905 L864 852 L886 878 L832 935 L808 1010 L710 1010 L722 960 L755 945Z" fill="#78a5d9"/>
 <path d="M880 845 Q895 820 925 822 Q952 835 948 860 Q935 875 905 870Z" fill="#f6bcc3"/>
 <path d="M860 846 L869 834 L919 890 L966 924 L946 930 L917 915Z" fill="#fdd25c"/>
 <path d="M869 834 L906 835 L964 892 L966 924 L919 890Z" fill="#ea6068"/>
 <ellipse cx="835" cy="978" rx="49" ry="52" fill="#f6bcc3"/>
 <path d="M820 1010 Q825 985 845 982 Q870 968 895 975 Q905 995 900 1010Z" fill="#fdd25c"/>
 <path d="M735 1010 Q740 995 760 996 Q780 998 782 1010Z" fill="#f6bcc3"/>
 <circle cx="845" cy="943" r="7" fill="#ee6a70"/><circle cx="862" cy="953" r="3" fill="#2a2228"/>
 </g>
</svg>
<!-- cursor -->
<svg class="a" style="left:933px;top:561px" width="16" height="24" viewBox="0 0 16 24"><path d="M2 1.5 V18 L6 14.2 L8.8 20.5 L11.2 19.4 L8.5 13.3 L13.8 13.2Z" fill="#111" stroke="#fff" stroke-width="1.2" stroke-linejoin="round"/></svg>

<!-- slide text -->
<div class="tx a" id="s2" style="left:1168px;top:467px;font-size:31px;color:#463c46;transform-origin:0 0;transform:scaleX(.89);-webkit-text-stroke:1.2px #463c46">Session 2</div>
<svg class="a" id="t1" style="left:960px;top:500px;overflow:visible" width="600" height="200" viewBox="0 0 600 200">
 <g transform="translate(40.5,85) scale(.926,1)"><text x="0" y="0" font-family="Liberation Sans" font-weight="bold" font-size="77" letter-spacing="4" word-spacing="6" fill="#463c46" stroke="#463c46" stroke-width="3.6" stroke-linejoin="round">Being on the</text></g>
 <g transform="translate(78.5,160.5) scale(.923,1)"><text x="0" y="0" font-family="Liberation Sans" font-weight="bold" font-size="78" letter-spacing="4" word-spacing="6" fill="#463c46" stroke="#463c46" stroke-width="3.6" stroke-linejoin="round">same page</text></g>
</svg>
<div class="tx a" id="a1" style="left:1094px;top:797px;font-size:36px;letter-spacing:1.2px;color:#463c46;transform-origin:0 0;transform:scaleX(.868);-webkit-text-stroke:1.5px #463c46">Sinna Luidmyla, NANGU,</div>
<div class="tx a" id="a2" style="left:1222px;top:852px;font-size:36px;letter-spacing:1.2px;color:#463c46;transform-origin:0 0;transform:scaleX(.91);-webkit-text-stroke:1.5px #463c46">Kharkiv</div>
<div id="taskbar" class="a"></div>
<!-- start -->
<svg class="a" style="left:612px;top:1036px" width="30" height="30" viewBox="0 0 30 30">
 <defs><linearGradient id="gs" x1="0" y1="0" x2="1" y2="1"><stop offset="0" stop-color="#3ec1f5"/><stop offset="1" stop-color="#0a6fd8"/></linearGradient></defs>
 <g fill="url(#gs)"><rect x="0.5" y="0.5" width="13.8" height="13.8" rx="1.2"/><rect x="15.7" y="0.5" width="13.8" height="13.8" rx="1.2"/><rect x="0.5" y="15.7" width="13.8" height="13.8" rx="1.2"/><rect x="15.7" y="15.7" width="13.8" height="13.8" rx="1.2"/></g>
</svg>
<!-- search -->
<div class="a" style="left:660px;top:1031px;width:273px;height:38px;border-radius:19px;background:#eef3f7;border:1px solid #d3dbe3"></div>
<svg class="a" style="left:672px;top:1039px" width="22" height="22" viewBox="0 0 22 22"><circle cx="9.5" cy="9.5" r="6.8" fill="none" stroke="#1c1c1c" stroke-width="2"/><path d="M14.5 14.5 L19.5 19.5" stroke="#1c1c1c" stroke-width="2.4" stroke-linecap="round"/></svg>
<div class="tx a" style="left:705px;top:1042px;font-size:18.5px;color:#616161">Пошук</div>
<svg class="a" style="left:866px;top:1032px" width="66" height="36" viewBox="0 0 66 36">
 <path d="M8 6 Q30 8 62 28" stroke="#7a5232" stroke-width="4" fill="none" stroke-linecap="round"/>
 <path d="M50 20 l6 -8 M58 25 l5 -4" stroke="#86c440" stroke-width="3" stroke-linecap="round"/>
 <ellipse cx="32" cy="22" rx="14" ry="11" fill="#a89a8a"/>
 <ellipse cx="20" cy="16" rx="9" ry="8" fill="#b8ab9b"/>
 <ellipse cx="19" cy="17" rx="6" ry="4" fill="#e8dccc"/>
 <path d="M10 22 q-4 4 -2 6" stroke="#a89a8a" stroke-width="4" fill="none" stroke-linecap="round"/>
</svg>
<!-- task view -->
<svg class="a" style="left:948px;top:1035px" width="32" height="30" viewBox="0 0 32 30">
 <defs><linearGradient id="gtv" x1="0" y1="0" x2="1" y2="1"><stop offset="0" stop-color="#4a4a4a"/><stop offset="1" stop-color="#1a1a1a"/></linearGradient></defs>
 <rect x="1" y="9" width="23" height="20" rx="2" fill="url(#gtv)"/>
 <rect x="9" y="1" width="22" height="20" rx="2" fill="#f2f2f2" opacity=".85"/>
 <rect x="9" y="9" width="15" height="12" fill="#b8b8b8"/>
</svg>
<!-- calculator -->
<svg class="a" style="left:1006px;top:1035px" width="25" height="30" viewBox="0 0 25 30">
 <rect x="0.5" y="0.5" width="24" height="29" rx="2" fill="#6d7a88"/>
 <rect x="3" y="3" width="19" height="5.5" rx="1" fill="#6cc9f2"/>
 <g fill="#e8ecf0"><rect x="3" y="10.5" width="5" height="5"/><rect x="10" y="10.5" width="5" height="5"/><rect x="17" y="10.5" width="5" height="5"/><rect x="3" y="17" width="5" height="5"/><rect x="10" y="17" width="5" height="5"/><rect x="3" y="23.5" width="5" height="4.5"/><rect x="10" y="23.5" width="5" height="4.5"/></g>
 <rect x="17" y="17" width="5" height="11" fill="#1f4fa0"/>
</svg>
<!-- folder -->
<svg class="a" style="left:1058px;top:1036px" width="32" height="29" viewBox="0 0 32 29">
 <path d="M1 3 a2 2 0 0 1 2 -2 H11 L14 4 H29 a2 2 0 0 1 2 2 V10 H1Z" fill="#e9a81c"/>
 <rect x="1" y="5.5" width="30" height="23" rx="2" fill="#fcd256"/>
 <rect x="8" y="20" width="16" height="7" rx="1.5" fill="#2078d4"/>
</svg>
<!-- chrome -->
<svg class="a" style="left:1113px;top:1035px" width="32" height="32" viewBox="0 0 32 32">
 <circle cx="16" cy="16" r="15" fill="#e8453c"/>
 <path d="M16 16 L3 8.5 A15 15 0 0 0 16 31Z" fill="#34a853"/>
 <path d="M16 16 L29 8.5 A15 15 0 0 1 16 31Z" fill="#fbc02d"/>
 <path d="M16 16 L3 8.5 A15 15 0 0 1 29 8.5Z" fill="#e8453c"/>
 <circle cx="16" cy="16" r="7" fill="#fff"/>
 <circle cx="16" cy="16" r="5.4" fill="#3b7ded"/>
</svg>
<div class="a" style="left:1125px;top:1071px;width:9px;height:3px;border-radius:2px;background:#6d7175"></div>
<!-- paint -->
<svg class="a" style="left:1168px;top:1035px" width="32" height="31" viewBox="0 0 32 31">
 <defs><linearGradient id="gp" x1="0" y1="0" x2="1" y2="1"><stop offset="0" stop-color="#5fd4f0"/><stop offset="1" stop-color="#1a7fd4"/></linearGradient></defs>
 <path d="M15 2 C5 2 1 10 2 17 C3 23 7 24 9 22 C11 20 13 22 12 25 C11 29 15 30 19 28 C27 25 30 18 29 11 C28 5 22 2 15 2Z" fill="url(#gp)"/>
 <circle cx="9" cy="10" r="2.6" fill="#e85a3a"/><circle cx="15" cy="6.5" r="2.6" fill="#f5c030"/><circle cx="7" cy="16" r="2.4" fill="#3aa84a"/>
 <path d="M22 8 L25 8 L24 29 L22.5 29Z" fill="#8a5a2a"/><path d="M21.5 5 L25.5 5 L25 10 L22 10Z" fill="#d8c8a8"/>
</svg>
<!-- viber -->
<svg class="a" style="left:1223px;top:1033px" width="40" height="36" viewBox="0 0 40 36">
 <path d="M15 4 C6 4 2 8 2 16 C2 22 4 25 7 27 V32 L11 28.5 C12.5 29 14 29 15 29 C24 29 28 25 28 16 C28 8 24 4 15 4Z" fill="#7f5ed8"/>
 <path d="M10 11 q1 -2 3 -1 l1.5 2.5 q.5 1 -.5 2 q1 3 4 4.5 q1 -1 2 -.5 l2.5 1.5 q1 2 -1 3 q-4 1 -8 -3.5 q-4 -4 -3.5 -8.5z" fill="#fff"/>
 <circle cx="27" cy="7" r="9.5" fill="#e8332e"/>
 <text x="27" y="11.5" font-family="Liberation Sans" font-size="13" fill="#fff" text-anchor="middle">1</text>
</svg>
<div class="a" style="left:1235px;top:1071px;width:9px;height:3px;border-radius:2px;background:#6d7175"></div>
<!-- zoom -->
<div class="a" style="left:1270px;top:1026px;width:47px;height:48px;border-radius:5px;background:rgba(255,255,255,.55);border:1px solid rgba(200,210,220,.6)"></div>
<svg class="a" style="left:1277px;top:1034px" width="33" height="33" viewBox="0 0 33 33">
 <defs><linearGradient id="gz" x1="0" y1="0" x2="0" y2="1"><stop offset="0" stop-color="#2f7cf5"/><stop offset="1" stop-color="#0b4fd0"/></linearGradient></defs>
 <path d="M16.5 1 C28 1 32 5 32 16.5 C32 28 28 32 16.5 32 C5 32 1 28 1 16.5 C1 5 5 1 16.5 1Z" fill="url(#gz)"/>
 <text x="16.5" y="19" font-family="Liberation Sans" font-weight="bold" font-size="8" fill="#fff" text-anchor="middle">zoom</text>
</svg>
<div class="a" style="left:1284px;top:1070px;width:19px;height:3px;border-radius:2px;background:#1f6fd6"></div>
<!-- tray -->
<svg class="a" style="left:1518px;top:1040px" width="380" height="24" viewBox="0 0 380 24">
 <path d="M4.5 12 L11 5.8 L17.5 12" fill="none" stroke="#1b1b1b" stroke-width="1.7"/>
 <g fill="none" stroke="#9aa0a6" stroke-width="1.3"><path d="M44 8 a9 6 0 0 1 16 0"/><path d="M46 11 a7 5 0 0 1 12 0"/><circle cx="51" cy="15" r="5"/></g>
 <circle cx="55" cy="17.5" r="3.6" fill="#e8322a"/>
 <g fill="none" stroke="#2b62c0" stroke-width="1.8" stroke-linecap="round"><rect x="82" y="0.8" width="5.5" height="11" rx="2.75"/><path d="M80 8 a4.8 4.8 0 0 0 9.5 0 M84.8 13 v3"/><path d="M103 7 L91 13.5 L96.5 14.5 L98 20 Z" stroke-linejoin="round"/></g>
 <text x="126" y="16" font-family="Liberation Sans" font-size="15" fill="#1b1b1b">УКР</text>
 <g fill="none" stroke="#1b1b1b" stroke-width="1.7" stroke-linecap="round"><path d="M176 7.5 a13 13 0 0 1 19 0"/><path d="M179.5 11 a8 8 0 0 1 12 0"/><path d="M183 14.5 a3.5 3.5 0 0 1 5 0"/></g>
 <circle cx="185.5" cy="17.5" r="1.6" fill="#1b1b1b"/>
 <g fill="none" stroke="#1b1b1b" stroke-width="1.6" stroke-linejoin="round"><path d="M207 9 H211 L216 4.5 V19.5 L211 15 H207Z"/><path d="M219.5 9 a4 4 0 0 1 0 6 M222.5 6.5 a7.5 7.5 0 0 1 0 11 M225.5 4 a11 11 0 0 1 0 16"/></g>
 <rect x="237" y="6" width="18" height="11" rx="2.5" fill="none" stroke="#1b1b1b" stroke-width="1.6"/><rect x="239.5" y="8.5" width="7" height="6" fill="#1b1b1b"/><rect x="256" y="9.5" width="2.2" height="4" fill="#1b1b1b"/>
 <path d="M362 15 q0 -8 6 -9 q6 1 6 9 l1.5 2.5 H360.5Z M366 19 a2 2 0 0 0 4 0" fill="#1b1b1b"/>
 <text x="363" y="14" font-family="Liberation Sans" font-size="8" font-weight="bold" fill="#fff">z</text>
 <text x="371" y="7" font-family="Liberation Sans" font-size="8" font-weight="bold" fill="#1b1b1b">z</text>
</svg>
<div class="tx a" style="left:1831px;top:1033px;font-size:14px;color:#1b1b1b">18:03</div>
<div class="tx a" style="left:1795px;top:1052px;font-size:14px;color:#1b1b1b">20.10.2025</div>
</body></html>
